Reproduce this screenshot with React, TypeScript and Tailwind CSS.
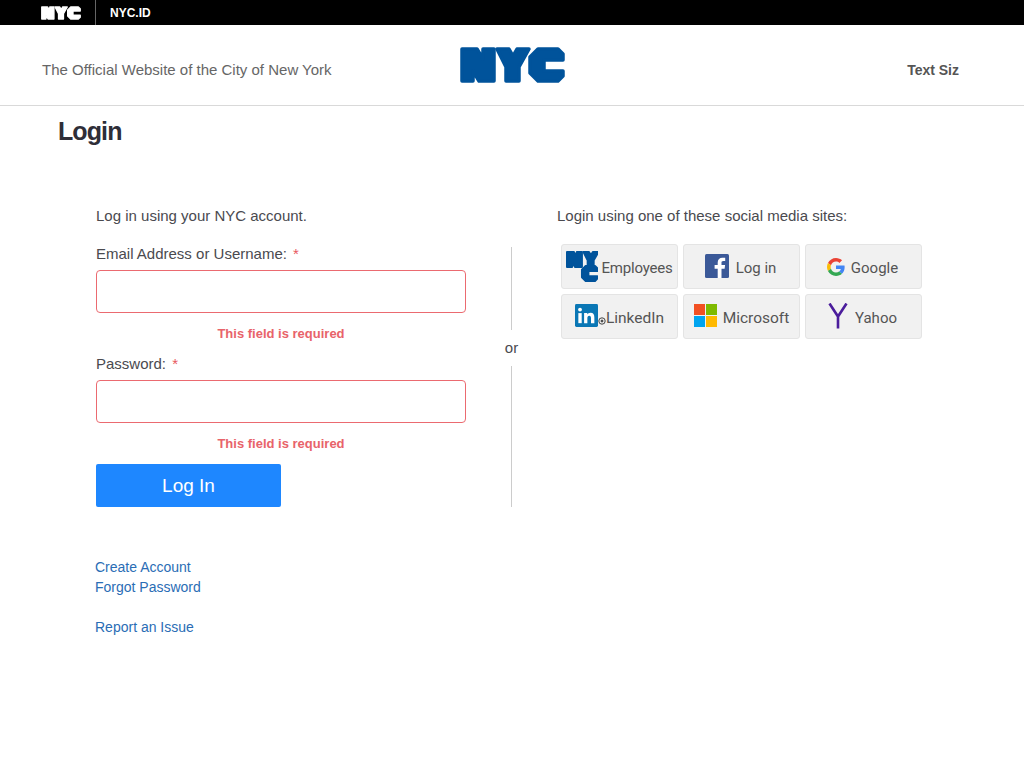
import React from 'react';

const font = "font-['Liberation_Sans',Arial,sans-serif]";

const letterN = 'M2 2H17L23 12V2H34V34H19L13 24V34H2Z';
const letterY = 'M37 2H49L53 9L57 2H69L59 20V34H46V20Z';
const letterC = 'M78 2H98L103 7V13H84V24H103V29L98 34H78L70 26V10Z';

function NycLogo({ className, color = '#00539b' }: { className?: string; color?: string }) {
  return (
    <svg viewBox="0 0 105 36" className={className} fill={color} stroke={color} strokeWidth="3.500" strokeLinejoin="round">
      <path d={letterN} />
      <path d={letterY} />
      <path d={letterC} />
    </svg>
  );
}

function NycStackedLogo() {
  return (
    <svg viewBox="0 0 32 31" className="w-8 h-[31px] shrink-0" fill="#00539b" stroke="#00539b" strokeWidth="4" strokeLinejoin="round">
      <g transform="scale(0.47)">
        <path d={letterN} />
        <path d={letterY} />
      </g>
      <g transform="translate(-17 14) scale(0.47)">
        <path d={letterC} />
      </g>
    </svg>
  );
}

function FacebookIcon() {
  return (
    <svg viewBox="0 0 24 24" className="w-6 h-6 shrink-0 mb-[2px]">
      <rect width="24" height="24" rx="1.5" fill="#3b5998" />
      <path d="M16.5 24v-9.3h3.1l.5-3.6h-3.6V8.8c0-1 .3-1.8 1.8-1.8h1.9V3.8c-.3 0-1.5-.1-2.8-.1-2.8 0-4.7 1.7-4.7 4.8v2.6H9.6v3.600h3.100V24z" fill="#fff" />
    </svg>
  );
}

function GoogleIcon() {
  return (
    <svg viewBox="0 0 48 48" className="w-[18px] h-[18px] shrink-0">
      <path fill="#EA4335" d="M24 9.500c3.500 0 6.700 1.200 9.200 3.600l6.900-6.900C35.900 2.400 30.500 0 24 0 14.600 0 6.500 5.400 2.600 13.200l8 6.200C12.400 13.700 17.700 9.500 24 9.500z" />
      <path fill="#4285F4" d="M47 24.500c0-1.600-.1-3.100-.4-4.500H24v9h12.900c-.6 3-2.200 5.500-4.800 7.200l7.700 6C44.300 38 47 31.800 47 24.500z" />
      <path fill="#FBBC05" d="M10.500 28.600c-.5-1.400-.8-3-.8-4.600s.3-3.200.8-4.600l-8-6.200C.9 16.500 0 20.100 0 24s.9 7.500 2.600 10.800z" />
      <path fill="#34A853" d="M24 48c6.500 0 11.900-2.100 15.900-5.800l-7.700-6c-2.200 1.500-5 2.300-8.200 2.300-6.300 0-11.600-4.200-13.500-9.900l-8 6.200C6.500 42.600 14.600 48 24 48z" />
    </svg>
  );
}

function LinkedinIcon() {
  return (
    <svg viewBox="0 0 24 24" className="w-[23px] h-[23px] shrink-0 mb-[2px]">
      <rect width="24" height="24" rx="1.5" fill="#0a77b5" />
      <rect x="3.500" y="9.500" width="3.500" height="10.500" fill="#fff" />
      <circle cx="5.250" cy="5.800" r="2" fill="#fff" />
      <path d="M9.500 9.500h3.300v1.500c.6-1 1.800-1.800 3.400-1.800 3 0 4 2 4 4.800V20h-3.500v-5c0-1.500-.4-2.700-1.800-2.700s-2 1.100-2 2.700v5H9.500z" fill="#fff" />
    </svg>
  );
}

function RegisteredMark() {
  return (
    <svg viewBox="0 0 8 8" className="w-2 h-2 shrink-0 mt-[8px]" fill="none" stroke="#444">
      <circle cx="4" cy="4" r="3.200" />
      <circle cx="4" cy="4" r="1" fill="#444" />
    </svg>
  );
}

function MicrosoftIcon() {
  return (
    <div className="grid grid-cols-2 gap-px w-[23px] h-[23px] shrink-0 mb-[2px]">
      <div className="bg-[#f25022]" />
      <div className="bg-[#7fba00]" />
      <div className="bg-[#00a4ef]" />
      <div className="bg-[#ffb900]" />
    </div>
  );
}

function YahooIcon() {
  return (
    <svg viewBox="0 0 20 26" className="w-5 h-[26px] shrink-0 mb-[2px]" fill="none" stroke="#4b1d9c" strokeWidth="2.600">
      <path d="M1.500 0.500L10 13.500L18.500 0.500M10 13.500V25.500" />
    </svg>
  );
}

function SocialButton({ children }: { children: React.ReactNode }) {
  return (
    <div className="h-[45px] w-[117px] flex items-center justify-center bg-[#f1f1f1] border border-[#e4e4e4] rounded-[3px] text-[#555] text-base font-['Roboto',sans-serif]">
      {children}
    </div>
  );
}

function Field({ label }: { label: string }) {
  return (
    <div>
      <label className="block text-[15px] leading-5 text-[#4a4a4f]">
        {label} <span className="text-[#e8575d] ml-0.5">*</span>
      </label>
      <div className="mt-[6px] h-[43px] w-[370px] border border-[#eb6a70] rounded-[4px] bg-white" />
      <p className="mt-3 w-[370px] text-center text-[13px] leading-[17px] font-bold text-[#e8636a]">This field is required</p>
    </div>
  );
}

export default function App() {
  return (
    <div className={`min-h-screen bg-white ${font}`}>
      {/* Top bar */}
      <div className="h-[25px] bg-black flex items-center pl-[41px]">
        <NycLogo className="w-10 h-[14px]" color="#fff" />
        <div className="ml-[14px] w-px h-[25px] bg-[#666]" />
        <span className="ml-[14px] text-xs font-bold text-white">NYC.ID</span>
      </div>

      {/* Header */}
      <header className="relative h-[81px] border-b border-[#d9d9d9] flex items-center justify-between pt-[10px] pl-[42px] pr-[65px]">
        <span className="text-[15px] text-[#666]">The Official Website of the City of New York</span>
        <NycLogo className="w-[105px] h-9 absolute left-[460px] top-[22px]" />
        <span className="text-sm font-bold text-[#555]">Text Siz</span>
      </header>

      <main className="pl-[58px]">
        <h1 className="mt-[9px] text-[25px] leading-[32px] font-semibold tracking-[-0.9px] text-[#2e2e38]">Login</h1>

        <div className="mt-[59px] pl-[38px] flex">
          {/* Left column */}
          <div className="w-[370px]">
            <p className="text-[15px] leading-5 text-[#4a4a4f]">Log in using your NYC account.</p>
            <div className="mt-[18px] flex flex-col gap-3">
              <Field label="Email Address or Username:" />
              <Field label="Password:" />
            </div>
            <button className="mt-[12px] w-[185px] h-[43px] pt-px bg-[#1e87ff] text-white text-[19px] rounded-[2px]">Log In</button>
            <div className="mt-[50px] -ml-px flex flex-col text-sm leading-5 text-[#2a6db5]">
              <a href="#">Create Account</a>
              <a href="#">Forgot Password</a>
              <a href="#" className="mt-5">Report an Issue</a>
            </div>
          </div>

          {/* Divider */}
          <div className="ml-[32px] w-[27px] h-[260px] mt-[41px] flex flex-col items-center text-[15px] text-[#4a4a4f]">
            <div className="w-px h-[83px] bg-[#ccc]" />
            <span className="leading-5 my-2">or</span>
            <div className="w-px flex-1 bg-[#ccc]" />
          </div>

          {/* Social column */}
          <div className="ml-[32px]">
            <p className="text-[15px] leading-5 text-[#4a4a4f]">Login using one of these social media sites:</p>
            <div className="mt-[18px] ml-1 grid grid-cols-[117px_117px_117px] gap-[5px]">
              <SocialButton>
                <NycStackedLogo />
                <span className="ml-[3px] pt-1 text-[15px] tracking-[-0.2px]">Employees</span>
              </SocialButton>
              <SocialButton>
                <FacebookIcon />
                <span className="ml-[7px] mr-[2px] pt-1 text-[15px]">Log in</span>
              </SocialButton>
              <SocialButton>
                <GoogleIcon />
                <span className="ml-[6px] mr-[2px] pt-1 text-[15px]">Google</span>
              </SocialButton>
              <SocialButton>
                <LinkedinIcon />
                <RegisteredMark />
                <span className="pt-1 text-[15.5px]">LinkedIn</span>
              </SocialButton>
              <SocialButton>
                <MicrosoftIcon />
                <span className="ml-[6px] pt-1 text-[15.5px]">Microsoft</span>
              </SocialButton>
              <SocialButton>
                <YahooIcon />
                <span className="ml-[7px] mr-[2px] pt-1 text-[15px]">Yahoo</span>
              </SocialButton>
            </div>
          </div>
        </div>
      </main>
    </div>
  );
}
